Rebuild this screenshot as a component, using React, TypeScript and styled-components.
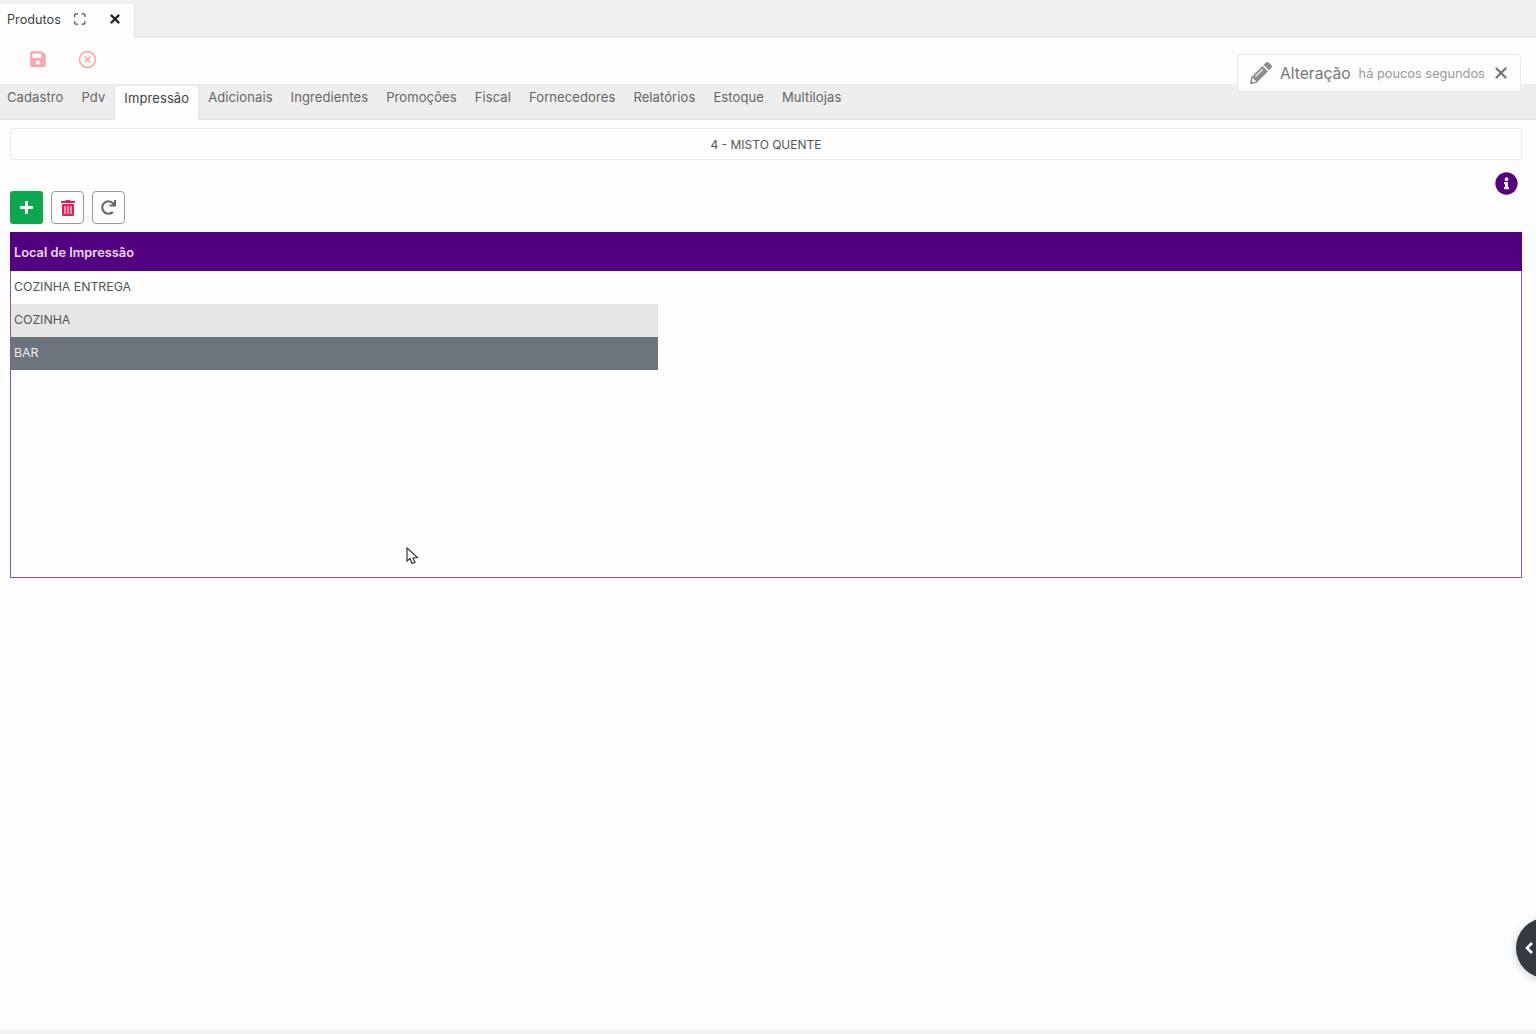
import { createGlobalStyle, styled } from 'styled-components';
import { FaInfoCircle, FaPencilAlt, FaPlus, FaRedo, FaSave, FaTrashAlt } from 'react-icons/fa';
import { FiX, FiXCircle } from 'react-icons/fi';
import { LuMaximize } from 'react-icons/lu';

const GlobalStyle = createGlobalStyle`
  html, body {
    margin: 0;
    padding: 0;
    background: #fdfdfd;
    font-family: Inter, 'Liberation Sans', sans-serif;
    color: #555;
  }
`;

const SUB_TABS = [
  'Cadastro',
  'Pdv',
  'Impressão',
  'Adicionais',
  'Ingredientes',
  'Promoções',
  'Fiscal',
  'Fornecedores',
  'Relatórios',
  'Estoque',
  'Multilojas',
];

const App = () => {
  return (
    <Page>
      <GlobalStyle />

      <WindowBar>
        <WindowTab>
          <WindowTitle>Produtos</WindowTitle>
          <LuMaximize size={14} color="#444" />
          <CloseWindow>
            <FiX size={14} strokeWidth={4} />
          </CloseWindow>
        </WindowTab>
      </WindowBar>

      <Toolbar>
        <FaSave size={18} color="#f9a9ab" />
        <FiXCircle size={19} color="#f9a9ab" />
      </Toolbar>

      <SubTabs>
        {SUB_TABS.map((tab) => (
          <SubTab key={tab} $active={tab === 'Impressão'}>
            {tab}
          </SubTab>
        ))}
      </SubTabs>

      <Content>
        <ProductTitle>4 - MISTO QUENTE</ProductTitle>

        <ActionsRow>
          <AddButton>
            <FaPlus size={15} />
          </AddButton>
          <OutlineButton>
            <FaTrashAlt size={16} color="#dc2458" />
          </OutlineButton>
          <OutlineButton>
            <FaRedo size={15} color="#666" />
          </OutlineButton>
          <InfoBadge>
            <FaInfoCircle size={23} color="#520080" />
          </InfoBadge>
        </ActionsRow>

        <Grid>
          <GridHeader>Local de Impressão</GridHeader>
          <GridRow>COZINHA ENTREGA</GridRow>
          <GridRow $variant="hover">COZINHA</GridRow>
          <GridRow $variant="selected">BAR</GridRow>
          <Cursor width="14" height="20" viewBox="0 0 14 20">
            <path
              d="M1 1 L1 14 L4 11.5 L6 16.5 L9 15.5 L7 11 L11.5 10.5 Z"
              fill="#fff"
              stroke="#333"
              strokeWidth="1.2"
            />
          </Cursor>
        </Grid>
      </Content>

      <Toast>
        <FaPencilAlt size={22} color="#8e8e8e" />
        <ToastTitle>Alteração</ToastTitle>
        <ToastTime>há poucos segundos</ToastTime>
        <ToastClose>
          <FiX size={18} strokeWidth={3} />
        </ToastClose>
      </Toast>

      <SideHandle>
        <svg width="10" height="14" viewBox="0 0 10 14">
          <path d="M8 2 L3 7 L8 12" fill="none" stroke="#fff" strokeWidth="2.6" />
        </svg>
      </SideHandle>

      <BottomStrip />
    </Page>
  );
};

const Page = styled.div`
  position: relative;
  width: 1536px;
  height: 1034px;
  overflow: hidden;
  display: flex;
  flex-direction: column;
  background: #fdfdfd;
`;

const WindowBar = styled.div`
  height: 38px;
  flex: none;
  display: flex;
  align-items: flex-end;
  background: #efefef;
  border-bottom: 1px solid #e6e6e6;
  box-sizing: border-box;
`;

const WindowTab = styled.div`
  width: 135px;
  height: 34px;
  margin-bottom: -1px;
  box-sizing: border-box;
  padding: 0 12px 4px 7px;
  display: flex;
  align-items: center;
  background: #fdfdfd;
  border-right: 1px solid #e4e4e4;
  border-top-right-radius: 3px;
`;

const WindowTitle = styled.span`
  width: 68px;
  font-size: 12.7px;
  color: #444;
`;

const CloseWindow = styled.span`
  display: flex;
  margin-left: 21px;
  color: #222;
`;

const Toolbar = styled.div`
  height: 46px;
  flex: none;
  display: flex;
  align-items: center;
  gap: 31px;
  padding: 0 0 4px 29px;
  box-sizing: border-box;
`;

const SubTabs = styled.div`
  height: 36px;
  flex: none;
  display: flex;
  align-items: flex-end;
  padding-left: 0;
  background: #eeeeee;
  border-bottom: 1px solid #e2e2e2;
  box-sizing: border-box;
`;

const SubTab = styled.div<{ $active?: boolean }>`
  height: ${({ $active }) => ($active ? '35px' : '34px')};
  margin-bottom: ${({ $active }) => ($active ? '-1px' : '0')};
  box-sizing: border-box;
  display: flex;
  align-items: center;
  padding: 0 9px 10px;
  font-size: 13px;
  letter-spacing: 0.1px;
  color: ${({ $active }) => ($active ? '#444' : '#666')};
  background: ${({ $active }) => ($active ? '#fdfdfd' : 'transparent')};
  border-top-left-radius: 3px;
  border-top-right-radius: 3px;
  ${({ $active }) => ($active ? 'border: 1px solid #e4e4e4; border-bottom: 0;' : '')}

  &:first-child {
    margin-left: -2px;
  }
`;

const Content = styled.div`
  display: flex;
  flex-direction: column;
  padding: 8px 14px 0 10px;
`;

const ProductTitle = styled.div`
  height: 32px;
  box-sizing: border-box;
  display: flex;
  align-items: center;
  justify-content: center;
  border: 1px solid #e8e8e8;
  border-radius: 3px;
  font-size: 12px;
  color: #555;
`;

const ActionsRow = styled.div`
  margin-top: 31px;
  height: 33px;
  display: flex;
  align-items: center;
  gap: 8px;
  position: relative;
`;

const AddButton = styled.button`
  width: 33px;
  height: 33px;
  padding: 0;
  display: flex;
  align-items: center;
  justify-content: center;
  background: #0ba84f;
  color: #fff;
  border: 0;
  border-radius: 3px;
`;

const OutlineButton = styled.button`
  width: 33px;
  height: 33px;
  padding: 0;
  display: flex;
  align-items: center;
  justify-content: center;
  background: #fdfdfd;
  border: 1px solid #999;
  border-radius: 4px;
`;

const InfoBadge = styled.span`
  position: absolute;
  right: 4px;
  top: -19px;
  display: flex;
`;

const Grid = styled.div`
  position: relative;
  margin-top: 8px;
  height: 346px;
  box-sizing: border-box;
  border: 1px solid #8a55a8;
  border-top: 0;
`;

const GridHeader = styled.div`
  height: 39px;
  margin: 0 -1px;
  padding: 1px 0 0 4px;
  box-sizing: border-box;
  display: flex;
  align-items: center;
  background: #520080;
  color: #eadcf2;
  font-size: 12.8px;
  font-weight: 600;
`;

const GridRow = styled.div<{ $variant?: 'hover' | 'selected' }>`
  width: 647px;
  height: 33px;
  box-sizing: border-box;
  padding: 0 0 2px 3px;
  display: flex;
  align-items: center;
  font-size: 12.3px;
  color: ${({ $variant }) => ($variant === 'selected' ? '#eeeeee' : '#555')};
  background: ${({ $variant }) =>
    $variant === 'hover' ? '#e6e6e6' : $variant === 'selected' ? '#6c757d' : 'transparent'};
`;

const Cursor = styled.svg`
  position: absolute;
  left: 395px;
  top: 315px;
`;

const Toast = styled.div`
  position: absolute;
  left: 1237px;
  top: 54px;
  width: 284px;
  height: 38px;
  box-sizing: border-box;
  padding: 0 10px 0 12px;
  display: flex;
  align-items: center;
  background: #fdfdfd;
  border: 1px solid #e8e8e8;
  border-radius: 3px;
`;

const ToastTitle = styled.span`
  margin-left: 8px;
  font-size: 15.6px;
  color: #777;
`;

const ToastTime = styled.span`
  margin-left: 8px;
  font-size: 12.8px;
  color: #999;
`;

const ToastClose = styled.span`
  display: flex;
  margin-left: auto;
  color: #777;
`;

const SideHandle = styled.div`
  position: absolute;
  left: 1516px;
  top: 918px;
  width: 60px;
  height: 60px;
  padding-left: 8px;
  box-sizing: border-box;
  display: flex;
  align-items: center;
  border-radius: 50%;
  background: #343a40;
  box-shadow: 0 2px 8px rgba(0, 0, 0, 0.2);
`;

const BottomStrip = styled.div`
  margin-top: auto;
  height: 4px;
  background: #f0f0f0;
`;

export default App;
